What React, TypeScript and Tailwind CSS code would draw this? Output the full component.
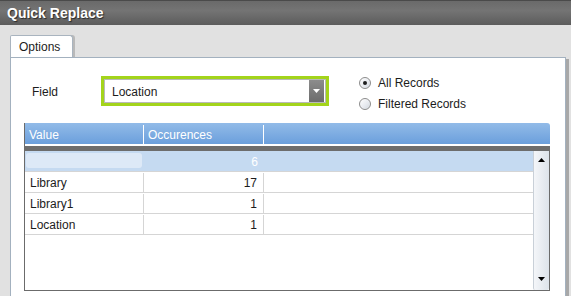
import { useState } from 'react'

const ROWS = [
  { value: 'Library', count: 17 },
  { value: 'Library1', count: 1 },
  { value: 'Location', count: 1 },
]

function Radio({ label, checked }: { label: string; checked?: boolean }) {
  return (
    <div className="flex h-[21px] items-center">
      <span className="flex h-[12px] w-[12px] items-center justify-center rounded-full border border-[#8c8c8c] bg-[linear-gradient(135deg,#ffffff_0%,#e6e9ee_60%,#cfd5dc_100%)] shadow-[inset_0_0_1px_#fff]">
        {checked && <span className="h-[4px] w-[4px] rounded-full bg-[#1e1e1e]" />}
      </span>
      <span className="ml-[7px] text-[12px] text-[#1c1c1c]">{label}</span>
    </div>
  )
}

function Triangle({ down, className }: { down?: boolean; className?: string }) {
  return (
    <svg width="7" height="4" viewBox="0 0 7 4" className={className} aria-hidden>
      <path d={down ? 'M0 0 L7 0 L3.5 4 Z' : 'M0 4 L7 4 L3.5 0 Z'} fill="currentColor" />
    </svg>
  )
}

export default function App() {
  const [field] = useState('Location')

  return (
    <div className="h-[296px] w-[571px] overflow-hidden bg-[#e1e1e1] font-['Liberation_Sans',Arial,sans-serif]">
      {/* title bar */}
      <div className="flex h-[25px] items-center border-t border-[#4a4a4a] bg-[linear-gradient(#6a6a6a,#747474_40%,#5c5c5c)] px-[7px]">
        <span className="text-[14px] font-bold text-white [text-shadow:1px_1px_1px_#2a2a2a]">
          Quick Replace
        </span>
      </div>

      <div className="ml-[10px] mr-[5px] mt-[10px]">
        {/* tab */}
        <div className="flex h-[22px] w-[63px] items-center rounded-tl-[2px] rounded-tr-[3px] border border-b-0 border-[#a9b4bf] bg-white pl-[8px] pt-[1px] text-[12px] text-[#1c1c1c] shadow-[2px_0_0_#b9b9b9]">
          Options
        </div>

        {/* panel */}
        <div className="h-[260px] border border-[#a3b1bf] bg-white shadow-[3px_2px_0_#a8a8a8]">
          <div className="flex items-start pl-[21px] pt-[14px]">
            <div className="mt-[4px] flex items-center">
              <span className="w-[69px] pt-[1px] text-[12px] text-[#1c1c1c]">Field</span>
              <div className="h-[30px] w-[228px] border-[3px] border-[#a3d41b]">
                <div className="flex h-full items-center border border-[#b9b9b9] bg-white">
                  <span className="flex-1 pl-[7px] pt-[1px] text-[12px] text-[#1c1c1c]">{field}</span>
                  <span className="mr-[1px] flex h-[22px] w-[15px] items-center justify-center bg-[linear-gradient(#8c8c8c,#6c6c6c)] text-white">
                    <Triangle down />
                  </span>
                </div>
              </div>
            </div>
            <div className="ml-[30px] flex flex-col">
              <Radio label="All Records" checked />
              <Radio label="Filtered Records" />
            </div>
          </div>

          {/* grid */}
          <div className="ml-[13px] mt-[9px] w-[526px] text-[12px]">
            <div className="flex h-[21px] items-stretch rounded-tr-[3px] border-l border-[#6b6b6b] bg-[linear-gradient(#92bbe8,#6b9fdc)] pt-[2px] text-white">
              <div className="flex w-[119px] items-center border-r border-white pl-[4px]">Value</div>
              <div className="flex w-[120px] items-center border-r border-white pl-[4px]">Occurences</div>
              <div className="flex-1" />
            </div>
            <div className="h-[2px] border-l border-[#6b6b6b] bg-white" />
            <div className="h-[5px] bg-[#6d6d6d]" />
            <div className="flex h-[140px] border-x border-b border-[#6b6b6b]">
              <div className="flex-1">
                <div className="flex h-[21px] border-b border-[#d5d5d5] bg-[#c5daf1]">
                  <div className="w-[119px] pb-[3px] pl-[1px] pr-[2px] pt-[2px]">
                    <div className="h-full rounded-[3px] bg-[#dde9f7]" />
                  </div>
                  <div className="flex w-[120px] items-center justify-end pr-[6px] pt-[1px] text-white">6</div>
                </div>
                {ROWS.map((row) => (
                  <div key={row.value} className="flex h-[21px] border-b border-[#d5d5d5] pt-[1px] text-[#1c1c1c]">
                    <div className="flex w-[119px] items-center border-r border-[#d5d5d5] pl-[5px]">{row.value}</div>
                    <div className="flex w-[120px] items-center justify-end border-r border-[#d5d5d5] pr-[6px]">
                      {row.count}
                    </div>
                  </div>
                ))}
              </div>
              <div className="flex w-[16px] flex-col items-center justify-between rounded-b-[2px] border-l border-[#c9d0d8] bg-[linear-gradient(90deg,#f4f6f9,#dde3ea)] py-[6px] text-black">
                <Triangle className="mt-[1px]" />
                <Triangle down className="mb-[3px]" />
              </div>
            </div>
          </div>
        </div>
      </div>
    </div>
  )
}
